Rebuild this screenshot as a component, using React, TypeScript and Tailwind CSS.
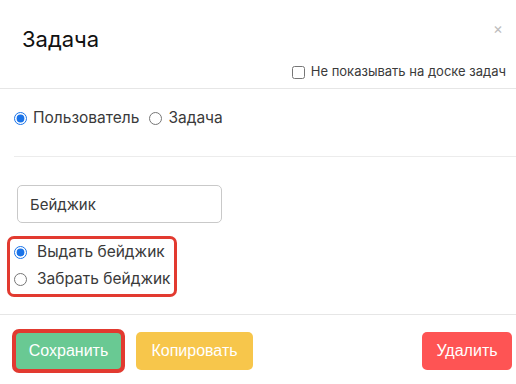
export default function App() {
  return (
    <div className="h-[384px] w-[516px] overflow-hidden bg-white font-['Inter',sans-serif] text-[#222]">
      {/* header */}
      <div className="relative h-[89px] border-b border-[#e6e6e6]">
        <h1 className="pl-[22px] pt-[25px] text-[22px] leading-[29px] font-normal text-[#111]">
          Задача
        </h1>
        <span className="absolute right-[13px] top-[21px] text-[15px] leading-[16px] text-[#bdbdbd]">
          ×
        </span>
        <label className="mt-[10px] flex h-[16px] items-center justify-end gap-[6px] pr-[10px] text-[13px] text-[#3a3a3a]">
          <input type="checkbox" className="m-0 h-[13px] w-[13px]" />
          Не показывать на доске задач
        </label>
      </div>

      {/* body */}
      <div className="pl-[14px]">
        <div className="mt-[19px] flex h-[20px] items-center text-[15.5px] text-[#3a3a3a]">
          <input type="radio" name="kind" defaultChecked className="m-0 h-[13px] w-[13px] accent-[#1a73e8]" />
          <span className="ml-[6px]">Пользователь</span>
          <input type="radio" name="kind" className="m-0 ml-[10px] h-[13px] w-[13px]" />
          <span className="ml-[6px]">Задача</span>
        </div>

        <div className="mt-[28px] border-t border-[#ececec]" />

        <input
          defaultValue="Бейджик"
          className="mt-[28px] ml-[3px] block h-[38px] w-[205px] rounded-[5px] border border-[#c9c9c9] pl-[12px] text-[15px] text-[#3a3a3a] outline-none"
        />

        <div className="-ml-[7px] mt-[13px] flex w-[170px] flex-col gap-[7px] rounded-[7px] border-[3px] border-[#e23a30] pb-[5px] pl-[4px] pt-[3px] text-[15.5px] text-[#3a3a3a]">
          <label className="flex h-[20px] items-center gap-[10px]">
            <input type="radio" name="badge" defaultChecked className="m-0 h-[13px] w-[13px] accent-[#1a73e8]" />
            Выдать бейджик
          </label>
          <label className="flex h-[20px] items-center gap-[10px]">
            <input type="radio" name="badge" className="m-0 h-[13px] w-[13px]" />
            Забрать бейджик
          </label>
        </div>
      </div>

      {/* footer */}
      <div className="mt-[17px] flex items-center border-t border-[#e6e6e6] pl-[12px] pr-[4px] pt-[14px] font-['Liberation_Sans',Arial,sans-serif] text-[16px] text-white">
        <div className="rounded-[7px] bg-[#e23a30] p-[4px]">
          <button className="flex h-[36px] w-[105px] items-center justify-center rounded-[4px] bg-[#69c993]">
            Сохранить
          </button>
        </div>
        <button className="ml-[11px] flex h-[38px] w-[117px] items-center justify-center rounded-[5px] bg-[#f7c64b]">
          Копировать
        </button>
        <button className="ml-auto flex h-[38px] w-[90px] items-center justify-center rounded-[5px] bg-[#fe5454]">
          Удалить
        </button>
      </div>
    </div>
  );
}
